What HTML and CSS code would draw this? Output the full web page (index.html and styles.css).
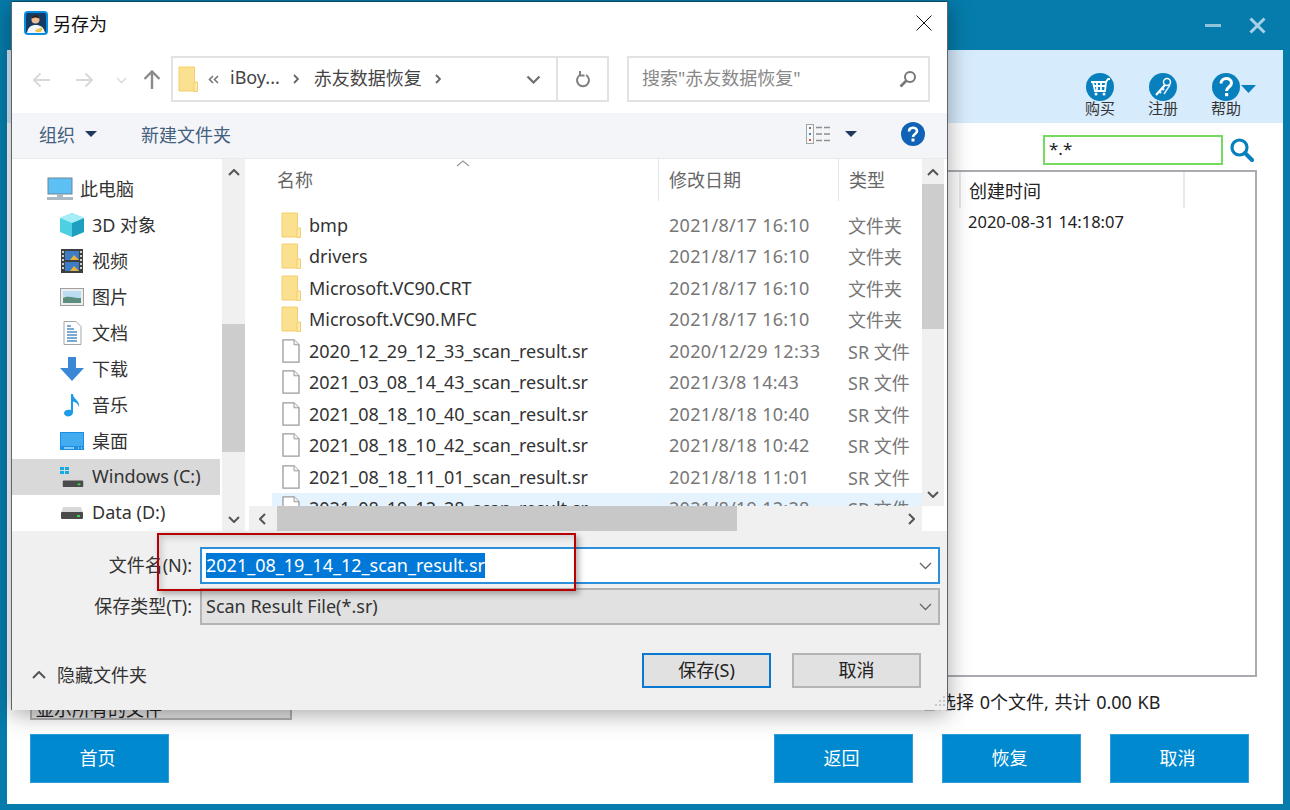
FILE: index.html
```html
<!DOCTYPE html>
<html lang="zh-CN">
<head>
<meta charset="UTF-8">
<title>另存为</title>
<link rel="stylesheet" href="styles.css">
</head>
<body>
<svg class="defs" width="0" height="0">
    <symbol id="folder" viewBox="0 0 20 26">
        <path d="M1 1h15.500v24H1z" fill="#fbe08f" stroke="#f2cf6c"/>
        <path d="M16 16h3.500v9.500H16z" fill="#fce9ae" stroke="#f2cf6c"/>
    </symbol>
    <symbol id="file" viewBox="0 0 18 24">
        <path d="M1 .8h11l5 5v17.400H1z" fill="#fff" stroke="#9a9a9a" stroke-width="1.300"/>
        <path d="M12 .8v5h5" fill="#f2f2f2" stroke="#9a9a9a"/>
    </symbol>
    <symbol id="drive" viewBox="0 0 24 14">
        <path d="M3 1h18l2 6H1z" fill="#d8d8d8"/>
        <rect x="1" y="6" width="22" height="7" rx="1" fill="#4a4a4a"/>
        <rect x="17" y="9" width="3" height="2" fill="#39d353"/>
    </symbol>
</svg>

<div class="app">
    <div class="app-bar">
        <svg class="win-min" width="16" height="3" viewBox="0 0 16 3"><rect width="16" height="3" fill="#8fc3dc"/></svg>
        <svg class="win-close" width="17" height="17" viewBox="0 0 17 17"><path d="M1.500 1.500l14 14M15.500 1.500l-14 14" stroke="#a9d0e6" stroke-width="3"/></svg>
    </div>
    <div class="app-body">
        <div class="ribbon">
            <div class="tool">
                <svg width="28" height="28" viewBox="0 0 28 28"><circle cx="14" cy="14" r="14" fill="#0880bd"/><path d="M5 9h15l2-3h2M7 9l2 9h10l1-9M11 9v9M15 9v9M7.500 13h13" fill="none" stroke="#fff" stroke-width="1.800"/><circle cx="10" cy="21" r="1.500" fill="#fff"/><circle cx="18" cy="21" r="1.500" fill="#fff"/></svg>
                <span>购买</span>
            </div>
            <div class="tool">
                <svg width="28" height="28" viewBox="0 0 28 28"><circle cx="14" cy="14" r="14" fill="#0880bd"/><circle cx="18" cy="9" r="3.500" fill="none" stroke="#fff" stroke-width="1.500"/><path d="M16 12L7 22M13 15l2 2M10 18l2 2" fill="none" stroke="#fff" stroke-width="2.200"/><path d="M21 12l-6 9" stroke="#d6ebfc" stroke-width="1.500"/></svg>
                <span>注册</span>
            </div>
            <div class="tool tool-help">
                <svg width="44" height="28" viewBox="0 0 44 28"><circle cx="14" cy="14" r="14" fill="#0880bd"/><path d="M9 10.500c0-6.500 10.500-6.500 10.500-.5 0 4-5 4-5 8" fill="none" stroke="#fff" stroke-width="3"/><rect x="13" y="20" width="3.200" height="3.200" fill="#fff"/><path d="M29 12h15l-7.500 8z" fill="#0880bd"/></svg>
                <span>帮助</span>
            </div>
        </div>
        <div class="search-row">
            <div class="mask-input">*.*</div>
            <svg width="24" height="25" viewBox="0 0 24 25"><circle cx="9.500" cy="9.500" r="7.500" fill="none" stroke="#0880bd" stroke-width="3.200"/><path d="M15 15l7 7" stroke="#0880bd" stroke-width="4" stroke-linecap="round"/></svg>
        </div>
        <div class="result-table">
            <div class="result-head">
                <div class="result-spacer"></div>
                <div class="result-col">创建时间</div>
            </div>
            <div class="result-row">2020-08-31 14:18:07</div>
        </div>
        <div class="status-row">
            <div class="filter-select">显示所有的文件</div>
            <div class="status-text">已选择 0个文件, 共计 0.00 KB</div>
        </div>
        <div class="app-footer">
            <button class="blue-btn">首页</button>
            <button class="blue-btn btn-back">返回</button>
            <button class="blue-btn">恢复</button>
            <button class="blue-btn">取消</button>
        </div>
    </div>

    <div class="dialog">
        <div class="title-bar">
            <svg class="app-icon" width="24" height="24" viewBox="0 0 24 24">
                <rect width="24" height="24" rx="4" fill="#0a8fe0"/>
                <rect x="2" y="2" width="20" height="20" rx="2" fill="#123c66"/>
                <path d="M3 22c1-7 5-8 9-8s8 2 9 8z" fill="#f4f7fa"/>
                <circle cx="11.500" cy="8.500" r="4" fill="#eebd94"/>
                <path d="M7.500 8c0-5.500 8-5.500 8 0-2-2-6-2-8 0z" fill="#2b1d14"/>
                <path d="M11 19l8-3-2 5h-5z" fill="#e6c34a"/>
            </svg>
            <span class="title-text">另存为</span>
            <svg class="close-x" width="16" height="16" viewBox="0 0 16 16"><path d="M.5.500l15 15M15.500.500l-15 15" stroke="#111" stroke-width="1"/></svg>
        </div>

        <div class="nav-row">
            <svg class="nav-back" width="18" height="16" viewBox="0 0 18 16"><path d="M18 8H2M8.500 1.500L2 8l6.500 6.500" fill="none" stroke="#d9d9d9" stroke-width="2"/></svg>
            <svg class="nav-forward" width="18" height="16" viewBox="0 0 18 16"><path d="M0 8h16M9.500 1.500L16 8l-6.500 6.500" fill="none" stroke="#d9d9d9" stroke-width="2"/></svg>
            <svg class="nav-drop" width="11" height="7" viewBox="0 0 11 7"><path d="M1 1l4.500 4.500L10 1" fill="none" stroke="#dcdcdc" stroke-width="1.600"/></svg>
            <svg class="nav-up" width="18" height="19" viewBox="0 0 18 19"><path d="M9 19V2M1.500 9L9 1.500 16.500 9" fill="none" stroke="#8a8a8a" stroke-width="2.400"/></svg>
            <div class="address">
                <svg class="crumb-folder" width="20" height="26"><use href="#folder"/></svg>
                <svg class="crumb-more" width="11" height="9" viewBox="0 0 11 9"><path d="M5 1L1.500 4.500 5 8M10 1L6.500 4.500 10 8" fill="none" stroke="#777" stroke-width="1.600"/></svg>
                <span class="crumb">iBoy...</span>
                <svg class="crumb-sep" width="6" height="10" viewBox="0 0 6 10"><path d="M1 1l4 4-4 4" fill="none" stroke="#666" stroke-width="1.800"/></svg>
                <span class="crumb">赤友数据恢复</span>
                <svg class="crumb-sep crumb-last" width="6" height="10" viewBox="0 0 6 10"><path d="M1 1l4 4-4 4" fill="none" stroke="#666" stroke-width="1.800"/></svg>
                <svg class="address-drop" width="15" height="9" viewBox="0 0 15 9"><path d="M1.500 1.500l6 6 6-6" fill="none" stroke="#6e6e6e" stroke-width="2.200"/></svg>
                <div class="address-refresh">
                    <svg width="16" height="18" viewBox="0 0 16 18"><path d="M5 5a6 6 0 1 0 6 0M5 1v4.500h4.500" fill="none" stroke="#808080" stroke-width="2"/></svg>
                </div>
            </div>
            <div class="search-box">
                <span>搜索"赤友数据恢复"</span>
                <svg width="18" height="18" viewBox="0 0 18 18"><circle cx="11" cy="7" r="5" fill="none" stroke="#777" stroke-width="2"/><path d="M7.500 10.500L1.500 16.500" stroke="#777" stroke-width="2.600"/></svg>
            </div>
        </div>

        <div class="toolbar">
            <span class="tool-text">组织</span>
            <svg class="caret caret-org" width="12" height="6" viewBox="0 0 12 6"><path d="M0 0h12L6 6z" fill="#1e395b"/></svg>
            <span class="tool-text">新建文件夹</span>
            <svg class="view-icon" width="25" height="20" viewBox="0 0 25 20">
                <rect x=".5" y=".5" width="7" height="19" fill="#f7f7f7" stroke="#a5a5a5"/>
                <rect x="3" y="3" width="2" height="2" fill="#7a7a7a"/><rect x="3" y="9" width="2" height="2" fill="#3b8ad9"/><rect x="3" y="15" width="2" height="2" fill="#d9534f"/>
                <path d="M10 3.500h6M18 3.500h6M10 10h6M18 10h6M10 16.500h6M18 16.500h6" stroke="#8f8f8f" stroke-width="1.400"/>
            </svg>
            <svg class="caret caret-view" width="12" height="6" viewBox="0 0 12 6"><path d="M0 0h12L6 6z" fill="#1e395b"/></svg>
            <svg class="help-icon" width="24" height="24" viewBox="0 0 24 24"><circle cx="12" cy="12" r="12" fill="#0f62b5"/><path d="M8 9.500c0-5 8-5 8-.5 0 3-4 3-4 6" fill="none" stroke="#fff" stroke-width="2.600"/><rect x="10.500" y="16.500" width="3" height="3" fill="#fff"/></svg>
        </div>

        <div class="browser">
            <div class="sidebar">
                <div class="side-item side-root">
                    <svg width="26" height="24" viewBox="0 0 26 24"><rect x="1" y="1" width="24" height="16" fill="#5cc0f5" stroke="#6f8494"/><rect x="10" y="17" width="6" height="3" fill="#a9bac5"/><rect y="20" width="26" height="3" fill="#a9bac5"/></svg>
                    <span>此电脑</span>
                </div>
                <div class="side-item">
                    <svg width="24" height="24" viewBox="0 0 24 24"><path d="M12 0l12 5v14l-12 5L0 19V5z" fill="#4dd0e1"/><path d="M12 10l12-5v14l-12 5z" fill="#1f9fc0"/><path d="M12 0l12 5-12 5L0 5z" fill="#a6eef5"/></svg>
                    <span>3D 对象</span>
                </div>
                <div class="side-item">
                    <svg width="24" height="24" viewBox="0 0 22 24"><rect width="22" height="24" fill="#3f3f3f"/><rect x="4" y="2" width="14" height="9" fill="#3e7cc4"/><rect x="4" y="13" width="14" height="9" fill="#3e7cc4"/><path d="M9 11l4-5 5 5zM9 22l4-5 5 5z" fill="#e8b33a"/><path d="M1 3h2M1 7h2M1 11h2M1 15h2M1 19h2M19 3h2M19 7h2M19 11h2M19 15h2M19 19h2" stroke="#fff" stroke-width="1.500"/></svg>
                    <span>视频</span>
                </div>
                <div class="side-item">
                    <svg width="24" height="20" viewBox="0 0 24 18"><rect x=".5" y=".5" width="23" height="17" fill="#eee" stroke="#a0a0a0"/><rect x="3" y="3" width="18" height="12" fill="#bcdcf2"/><path d="M3 10c5-3 11 0 18 0v5H3z" fill="#5c8f80"/></svg>
                    <span>图片</span>
                </div>
                <div class="side-item">
                    <svg width="24" height="24" viewBox="0 0 24 24"><path d="M4 .5h12l5 5v18H4z" fill="#fff" stroke="#a5a5a5"/><path d="M7 5h4M7 8h7M7 11h10M7 14h10M7 17h10M7 20h10" stroke="#4f8dc4" stroke-width="1.400"/></svg>
                    <span>文档</span>
                </div>
                <div class="side-item">
                    <svg width="24" height="24" viewBox="0 0 24 24"><path d="M8 0h8v11h8L12 24 0 11h8z" fill="#3a87d6"/></svg>
                    <span>下载</span>
                </div>
                <div class="side-item">
                    <svg width="24" height="24" viewBox="0 0 24 24"><path d="M11 1h2c0 5 7 6 6 13-1-3-3-5-6-5.500V19c0 6-9 5.500-9 1 0-3 4-4 7-3z" fill="#1e9be8"/></svg>
                    <span>音乐</span>
                </div>
                <div class="side-item">
                    <svg width="24" height="20" viewBox="0 0 24 18"><rect width="24" height="18" fill="#1a8fe3"/><rect x="1" y="1" width="22" height="13" fill="#43acf0"/><path d="M4 16h10M18 16h1M21 16h1" stroke="#fff"/></svg>
                    <span>桌面</span>
                </div>
                <div class="side-item side-active">
                    <svg width="24" height="22" viewBox="0 0 24 22"><path d="M0 1h4v3H0zM5 1h4v3H5zM0 5h4v3H0zM5 5h4v3H5z" fill="#16a9e6"/><svg x="1" y="9" width="22" height="13" viewBox="0 0 24 14"><use href="#drive"/></svg></svg>
                    <span>Windows (C:)</span>
                </div>
                <div class="side-item">
                    <svg width="24" height="14" viewBox="0 0 24 14"><use href="#drive"/></svg>
                    <span>Data (D:)</span>
                </div>
            </div>
            <div class="side-scroll">
                <svg class="arrow-up" width="12" height="7" viewBox="0 0 12 7"><path d="M1 6l5-5 5 5" fill="none" stroke="#555" stroke-width="2"/></svg>
                <div class="side-thumb"></div>
                <svg class="arrow-down" width="12" height="7" viewBox="0 0 12 7"><path d="M1 1l5 5 5-5" fill="none" stroke="#555" stroke-width="2"/></svg>
            </div>

            <div class="file-pane">
                <div class="file-area">
                    <div class="file-head">
                        <div class="head-name">名称
                            <svg class="sort-caret" width="14" height="7" viewBox="0 0 14 7"><path d="M1 6l6-5 6 5" fill="none" stroke="#9a9a9a" stroke-width="1.300"/></svg>
                        </div>
                        <div class="head-date">修改日期</div>
                        <div class="head-type">类型</div>
                    </div>
                    <div class="file-rows">
                        <div class="file-row"><div class="cell-name"><svg width="20" height="26"><use href="#folder"/></svg>bmp</div><div class="cell-date">2021/8/17 16:10</div><div class="cell-type">文件夹</div></div>
                        <div class="file-row"><div class="cell-name"><svg width="20" height="26"><use href="#folder"/></svg>drivers</div><div class="cell-date">2021/8/17 16:10</div><div class="cell-type">文件夹</div></div>
                        <div class="file-row"><div class="cell-name"><svg width="20" height="26"><use href="#folder"/></svg>Microsoft.VC90.CRT</div><div class="cell-date">2021/8/17 16:10</div><div class="cell-type">文件夹</div></div>
                        <div class="file-row"><div class="cell-name"><svg width="20" height="26"><use href="#folder"/></svg>Microsoft.VC90.MFC</div><div class="cell-date">2021/8/17 16:10</div><div class="cell-type">文件夹</div></div>
                        <div class="file-row"><div class="cell-name"><svg width="18" height="24"><use href="#file"/></svg>2020_12_29_12_33_scan_result.sr</div><div class="cell-date">2020/12/29 12:33</div><div class="cell-type">SR 文件</div></div>
                        <div class="file-row"><div class="cell-name"><svg width="18" height="24"><use href="#file"/></svg>2021_03_08_14_43_scan_result.sr</div><div class="cell-date">2021/3/8 14:43</div><div class="cell-type">SR 文件</div></div>
                        <div class="file-row"><div class="cell-name"><svg width="18" height="24"><use href="#file"/></svg>2021_08_18_10_40_scan_result.sr</div><div class="cell-date">2021/8/18 10:40</div><div class="cell-type">SR 文件</div></div>
                        <div class="file-row"><div class="cell-name"><svg width="18" height="24"><use href="#file"/></svg>2021_08_18_10_42_scan_result.sr</div><div class="cell-date">2021/8/18 10:42</div><div class="cell-type">SR 文件</div></div>
                        <div class="file-row"><div class="cell-name"><svg width="18" height="24"><use href="#file"/></svg>2021_08_18_11_01_scan_result.sr</div><div class="cell-date">2021/8/18 11:01</div><div class="cell-type">SR 文件</div></div>
                        <div class="file-row row-hover"><div class="cell-name"><svg width="18" height="24"><use href="#file"/></svg>2021_08_19_12_28_scan_result.sr</div><div class="cell-date">2021/8/19 12:28</div><div class="cell-type">SR 文件</div></div>
                    </div>
                </div>
                <div class="list-vscroll">
                    <svg class="arrow-up" width="12" height="7" viewBox="0 0 12 7"><path d="M1 6l5-5 5 5" fill="none" stroke="#555" stroke-width="2"/></svg>
                    <div class="list-thumb"></div>
                    <svg class="arrow-down" width="12" height="7" viewBox="0 0 12 7"><path d="M1 1l5 5 5-5" fill="none" stroke="#555" stroke-width="2"/></svg>
                </div>
                <div class="list-hscroll">
                    <svg width="7" height="12" viewBox="0 0 7 12"><path d="M6 1L1 6l5 5" fill="none" stroke="#555" stroke-width="2"/></svg>
                    <div class="list-hthumb"></div>
                    <svg width="7" height="12" viewBox="0 0 7 12"><path d="M1 1l5 5-5 5" fill="none" stroke="#555" stroke-width="2"/></svg>
                </div>
                <div class="scroll-corner"></div>
            </div>
        </div>

        <div class="save-form">
            <div class="form-grid">
                <label class="form-label">文件名(N):</label>
                <div class="name-input">
                    <span class="name-value">2021_08_19_14_12_scan_result.sr</span>
                    <svg width="13" height="8" viewBox="0 0 13 8"><path d="M1 1l5.500 5.500L12 1" fill="none" stroke="#666" stroke-width="1.300"/></svg>
                </div>
                <label class="form-label">保存类型(T):</label>
                <div class="type-select">
                    <span>Scan Result File(*.sr)</span>
                    <svg width="13" height="8" viewBox="0 0 13 8"><path d="M1 1l5.500 5.500L12 1" fill="none" stroke="#666" stroke-width="1.300"/></svg>
                </div>
            </div>
            <div class="form-footer">
                <svg class="hide-arrow" width="14" height="8" viewBox="0 0 14 8"><path d="M1 7l6-6 6 6" fill="none" stroke="#555" stroke-width="2"/></svg>
                <span class="hide-folders">隐藏文件夹</span>
                <button class="dlg-btn dlg-primary">保存(S)</button>
                <button class="dlg-btn">取消</button>
            </div>
            <svg class="resize-grip" width="16" height="14" viewBox="0 0 16 14">
                <path d="M13 1h2v2h-2zM9 5h2v2H9zM13 5h2v2h-2zM5 9h2v2H5zM9 9h2v2H9zM13 9h2v2h-2z" fill="#c9c9c9"/>
            </svg>
        </div>
    </div>

    <div class="red-mark"></div>
</div>
</body>
</html>
```

FILE: styles.css
```css
* {
    box-sizing: border-box;
}
html, body {
    margin: 0;
    height: 100%;
    overflow: hidden;
}
body {
    font-family: "Noto Sans", "Noto Sans CJK SC", sans-serif;
    font-size: 18px;
    color: #222;
}
.defs {
    position: absolute;
}
svg {
    display: block;
    flex-shrink: 0;
}
button {
    font: inherit;
    cursor: default;
}

/* window behind the dialog */
.app {
    position: relative;
    width: 1290px;
    height: 810px;
    background: #057cab;
    padding: 0 7px 6px;
    display: flex;
    flex-direction: column;
}
.app-bar {
    height: 50px;
    flex: none;
    display: flex;
    align-items: flex-start;
    justify-content: flex-end;
}
.win-min {
    margin-top: 24px;
}
.win-close {
    margin: 17px 17px 0 28px;
}
.app-body {
    flex: 1;
    background: #fff;
    display: flex;
    flex-direction: column;
    padding-bottom: 21px;
}
.ribbon {
    height: 73px;
    flex: none;
    background: #d6ebfc;
    display: flex;
    justify-content: flex-end;
    padding: 23px 43px 0 0;
    gap: 35px;
}
.tool {
    width: 28px;
    display: flex;
    flex-direction: column;
    align-items: center;
}
.tool span {
    font-size: 15px;
    line-height: 16px;
    margin-top: -1px;
    white-space: nowrap;
    color: #333;
}
.tool-help svg {
    margin-right: -16px;
}
.search-row {
    height: 47px;
    flex: none;
    display: flex;
    justify-content: flex-end;
    align-items: flex-start;
    padding: 12px 29px 0 0;
    gap: 7px;
}
.search-row svg {
    margin-top: 3px;
}
.mask-input {
    width: 180px;
    height: 30px;
    border: 2px solid #76d960;
    padding: 0 4px;
    line-height: 24px;
    font-size: 17px;
}
.result-table {
    height: 507px;
    flex: none;
    margin: 0 26px 0 23px;
    border: 2px solid #a8acb0;
}
.result-head {
    display: flex;
    height: 36px;
    line-height: 38px;
}
.result-spacer {
    width: 927px;
}
.result-col {
    width: 226px;
    padding-left: 8px;
    border-left: 2px solid #e8e8e8;
    border-right: 2px solid #e8e8e8;
}
.result-row {
    padding-left: 936px;
    font-size: 16.500px;
    line-height: 28px;
}
.status-row {
    height: 57px;
    flex: none;
    display: flex;
    padding: 13px 0 0 23px;
}
.filter-select {
    width: 262px;
    height: 30px;
    border: 2px solid #b0b0b0;
    background: #e4e4e4;
    padding-left: 4px;
    line-height: 34px;
}
.status-text {
    margin-left: 628px;
    line-height: 24px;
    word-spacing: 1px;
    white-space: nowrap;
}
.app-footer {
    flex: 1;
    display: flex;
    padding: 0 34px 0 23px;
    gap: 29px;
}
.blue-btn {
    width: 139px;
    height: 49px;
    background: #0089cf;
    border: 1px solid #2d9fdb;
    color: #fff;
    padding: 0 4px 4px 0;
}
.btn-back {
    margin-left: auto;
}

/* save dialog */
.dialog {
    position: absolute;
    left: 11px;
    top: 1px;
    width: 937px;
    height: 709px;
    background: #fff;
    border: 1px solid #5e6468;
    border-top-color: #0b4a63;
    border-bottom: 0;
    box-shadow: 0 4px 22px rgba(0, 0, 0, .35);
    display: flex;
    flex-direction: column;
}
.title-bar {
    height: 44px;
    flex: none;
    display: flex;
    align-items: center;
    padding: 0 15px 2px 12px;
}
.title-text {
    margin-left: 5px;
    color: #111;
}
.close-x {
    margin-left: auto;
}
.nav-row {
    height: 67px;
    flex: none;
    display: flex;
    padding: 10px 17px 0 20px;
    align-items: flex-start;
}
.nav-back {
    margin-top: 16px;
}
.nav-forward {
    margin: 16px 0 0 26px;
}
.nav-drop {
    margin: 21px 0 0 22px;
}
.nav-up {
    margin: 14px 0 0 16px;
}
.address {
    margin-left: 10px;
    width: 438px;
    height: 46px;
    border: 2px solid #e2e2e2;
    display: flex;
    align-items: center;
    padding-left: 5px;
    color: #444;
}
.crumb {
    margin-top: -5px;
}
.crumb-more {
    margin: 0 11px 0 10px;
}
.crumb-sep {
    margin: 0 15px 0 13px;
}
.crumb-last {
    margin: 0 0 0 13px;
}
.address-drop {
    margin-left: auto;
    margin-right: 15px;
}
.address-refresh {
    width: 51px;
    height: 100%;
    border-left: 2px solid #e2e2e2;
    display: flex;
    align-items: center;
    justify-content: center;
}
.search-box {
    margin-left: 18px;
    width: 303px;
    height: 46px;
    border: 2px solid #e2e2e2;
    display: flex;
    align-items: center;
    justify-content: space-between;
    padding: 0 11px 0 13px;
    color: #888;
}
.search-box span {
    margin-top: -5px;
}
.toolbar {
    height: 46px;
    flex: none;
    background: #f4f5f8;
    border-bottom: 1px solid #e9eaec;
    display: flex;
    align-items: center;
    padding: 0 22px 3px 27px;
}
.tool-text {
    color: #43607f;
    margin-top: -1px;
}
.caret-org {
    margin: 0 44px 0 10px;
}
.view-icon {
    margin-left: auto;
}
.caret-view {
    margin: 0 44px 0 14px;
}
.browser {
    height: 372px;
    flex: none;
    display: flex;
}
.sidebar {
    width: 210px;
    flex: none;
    padding-top: 12px;
    overflow: hidden;
}
.side-item {
    height: 36px;
    display: flex;
    align-items: center;
    gap: 8px;
    padding-left: 48px;
    white-space: nowrap;
    color: #333;
}
.side-item span {
    margin-top: -2px;
}
.side-item svg {
    width: 24px;
}
.side-root {
    padding-left: 35px;
    gap: 7px;
}
.side-root svg {
    width: 26px;
}
.side-active {
    background: #d9d9d9;
    margin-right: 2px;
}
.side-scroll {
    width: 23px;
    flex: none;
    background: #f0f0f0;
    display: flex;
    flex-direction: column;
    align-items: center;
    margin-right: 4px;
    padding-top: 10px;
}
.side-thumb {
    width: 100%;
    height: 128px;
    background: #cdcdcd;
    margin-top: 148px;
}
.arrow-down {
    margin-top: auto;
    margin-bottom: 8px;
}
.file-pane {
    flex: 1;
    min-width: 0;
    display: grid;
    grid-template-columns: 673px 22px;
    grid-template-rows: 347px 25px;
}
.file-area {
    overflow: hidden;
}
.file-head {
    height: 50px;
    display: flex;
    color: #666;
}
.head-name {
    position: relative;
    width: 409px;
    padding: 9px 0 0 28px;
    line-height: 25px;
}
.sort-caret {
    position: absolute;
    left: 207px;
    top: 1px;
}
.head-date, .head-type {
    height: 42px;
    padding: 9px 0 0 10px;
    line-height: 25px;
    border-left: 1px solid #e5e5e5;
}
.head-date {
    width: 180px;
}
.head-type {
    flex: 1;
}
.file-row {
    height: 31.500px;
    display: flex;
    align-items: center;
    white-space: nowrap;
}
.cell-name {
    width: 409px;
    padding-left: 32px;
    display: flex;
    align-items: center;
    gap: 8px;
    color: #333;
}
.cell-name svg {
    width: 20px;
}
.cell-date {
    width: 180px;
    padding-left: 11px;
    color: #777;
    letter-spacing: .3px;
}
.cell-type {
    padding-left: 10px;
    color: #777;
}
.row-hover {
    background: #e5f3ff;
    margin-left: 23px;
}
.row-hover .cell-name {
    width: 386px;
    padding-left: 9px;
}
.list-vscroll {
    background: #f0f0f0;
    display: flex;
    flex-direction: column;
    align-items: center;
    padding-top: 10px;
}
.list-thumb {
    width: 100%;
    height: 145px;
    background: #cdcdcd;
    margin-top: 8px;
}
.list-hscroll {
    background: #f0f0f0;
    display: flex;
    align-items: center;
    justify-content: space-between;
    padding: 0 7px 0 10px;
}
.list-hthumb {
    width: 460px;
    height: 100%;
    background: #c8c8c8;
    margin: 0 auto 0 11px;
}
.scroll-corner {
    background: #fff;
}

.save-form {
    position: relative;
    flex: 1;
    background: #f0f0f0;
}
.form-grid {
    display: grid;
    grid-template-columns: 180px 740px;
    column-gap: 8px;
    row-gap: 4px;
    padding-top: 16px;
}
.form-label {
    justify-self: end;
    align-self: center;
    margin-top: -3px;
    color: #333;
    white-space: nowrap;
}
.name-input, .type-select {
    height: 37px;
    display: flex;
    align-items: center;
    justify-content: space-between;
    padding: 0 6px 0 4px;
}
.name-input {
    background: #fff;
    border: 2px solid #2c8fdc;
}
.name-value {
    background: #0078d7;
    color: #fff;
    line-height: 25px;
    margin-top: -1px;
}
.type-select {
    background: #e1e1e1;
    border: 2px solid #b4b4b4;
    color: #333;
}
.type-select span {
    margin-top: -1px;
}
.form-footer {
    display: flex;
    align-items: center;
    padding: 28px 26px 0 20px;
}
.hide-arrow {
    margin-top: 9px;
}
.hide-folders {
    margin: 7px 0 0 11px;
    color: #333;
}
.dlg-btn {
    width: 129px;
    height: 35px;
    background: #e1e1e1;
    border: 2px solid #b4b4b4;
    color: #222;
    margin-left: 21px;
    padding: 0 0 4px;
}
.dlg-primary {
    margin-left: auto;
    border-color: #0a78d2;
}
.resize-grip {
    position: absolute;
    right: 1px;
    bottom: 1px;
}

/* annotation drawn on the screenshot */
.red-mark {
    position: absolute;
    left: 157px;
    top: 533px;
    width: 419px;
    height: 58px;
    border: 2px solid #b80000;
    box-shadow: 3px 3px 6px rgba(0, 0, 0, .3), inset 3px 3px 6px rgba(0, 0, 0, .15);
}
```
